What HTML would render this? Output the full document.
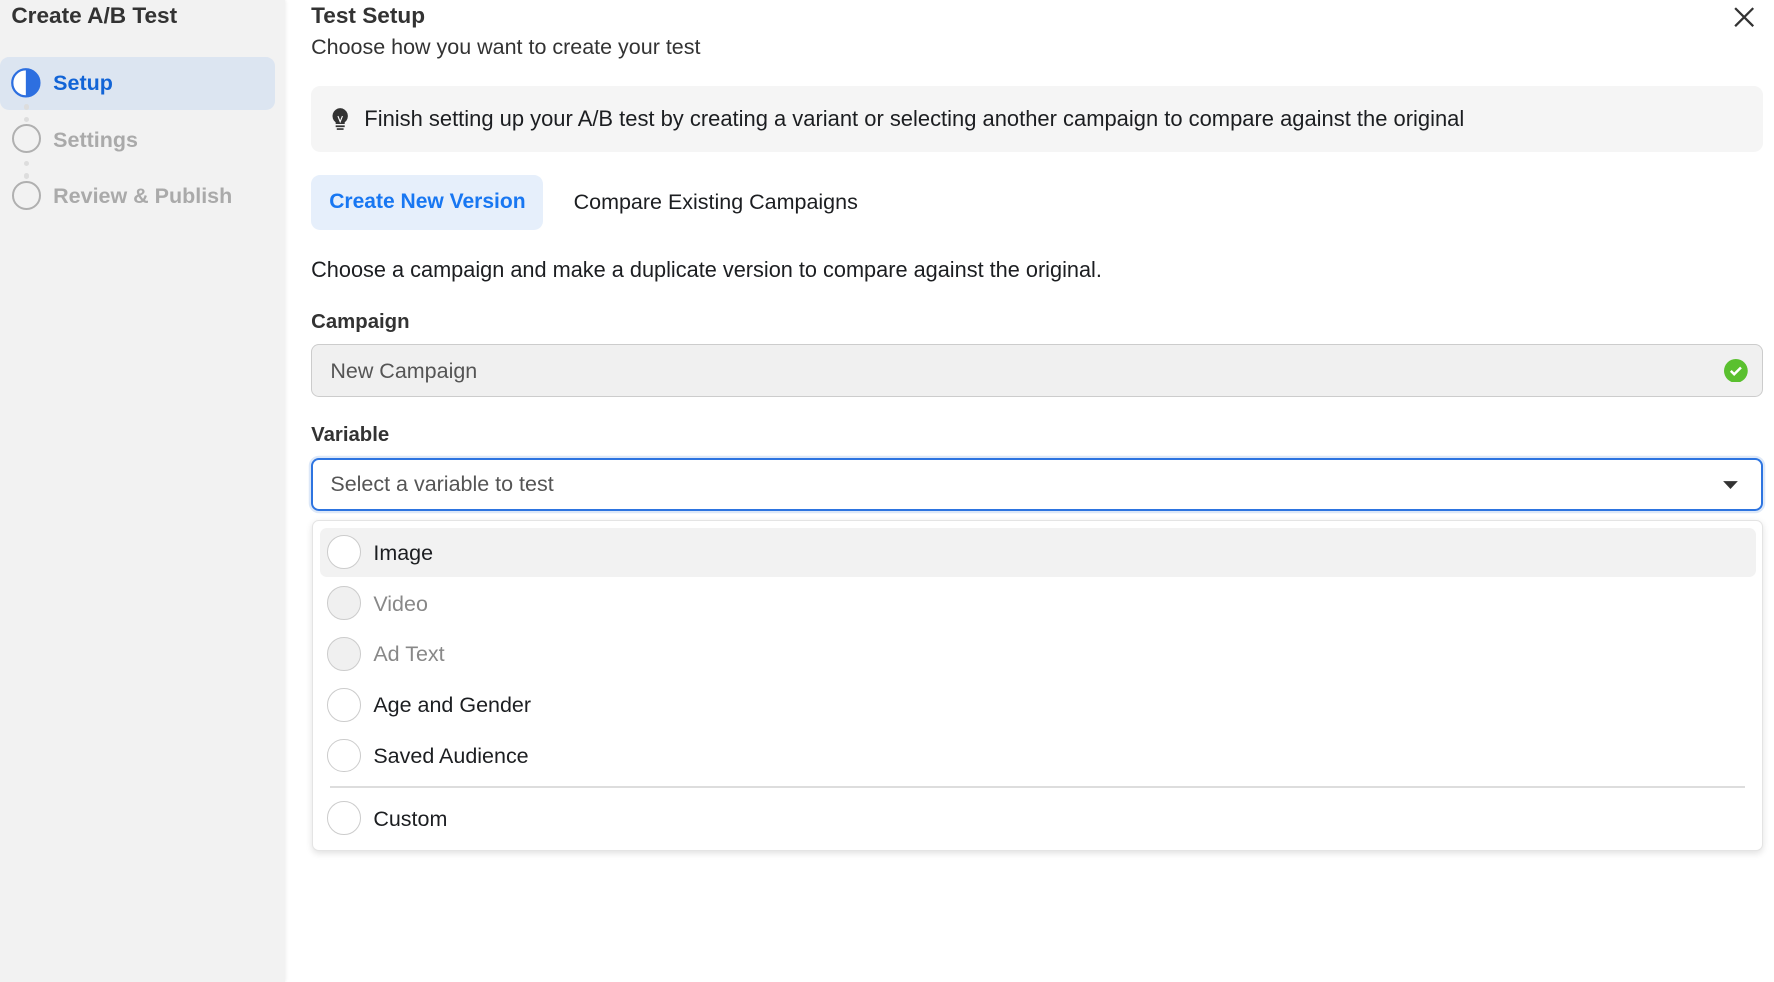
<!DOCTYPE html>
<html><head><meta charset="utf-8"><style>
html,body{margin:0;padding:0;width:1774px;height:982px;overflow:hidden;background:#fff}
#w{zoom:1.13138;width:1568px;height:868px;position:relative;font-family:"Liberation Sans",Arial,sans-serif;color:#1c1e21}
.a{position:absolute;white-space:nowrap}
#sb{position:absolute;left:0;top:0;width:252px;height:868px;background:#f2f2f2;box-shadow:1px 0 3px rgba(0,0,0,.08)}
.st{position:absolute;left:47px;font-size:19px;font-weight:bold;color:#aaa;line-height:24px}
.c{position:absolute;left:11px;width:22px;height:22px;border:2px solid #b0b0b0;border-radius:50%;box-sizing:content-box}
.dot{position:absolute;left:21px;width:5px;height:5px;border-radius:50%;background:#ddd}
.r{position:absolute;left:289px;width:28px;height:28px;border:1.5px solid #ccc;border-radius:50%;background:#fff}
.r.d{background:#f0f0f0}
.it{position:absolute;left:330px;font-size:19px;line-height:24px;color:#1c1e21}
</style></head><body><div id="w">
<div id="sb">
<div class="a" style="left:10px;top:3px;font-size:20px;font-weight:bold;color:#333">Create A/B Test</div>
<div style="position:absolute;left:0;top:50px;width:243px;height:47px;background:#dce5f1;border-radius:8px"></div>
<svg style="position:absolute;left:9px;top:59px" width="28" height="28"><circle cx="14" cy="14" r="12" fill="#fff" stroke="#2d6fe0" stroke-width="2"/><path d="M14 2a12 12 0 0 1 0 24z" fill="#2d6fe0"/></svg>
<div class="st" style="top:62px;color:#1264d6">Setup</div>
<div class="dot" style="top:92px"></div><div class="dot" style="top:103px"></div>
<div class="c" style="top:110px"></div>
<div class="st" style="top:112px">Settings</div>
<div class="dot" style="top:142px"></div><div class="dot" style="top:153px"></div>
<div class="c" style="top:160px"></div>
<div class="st" style="top:162px">Review &amp; Publish</div>
</div>
<div class="a" style="left:275px;top:3px;font-size:20px;font-weight:bold;color:#333">Test Setup</div>
<div class="a" style="left:275px;top:31px;font-size:19px;color:#333">Choose how you want to create your test</div>
<svg style="position:absolute;left:1533px;top:6px" width="18" height="18"><path d="M1 1L17 17M17 1L1 17" stroke="#333" stroke-width="2"/></svg>
<div style="position:absolute;left:275px;top:76px;width:1283px;height:58px;background:#f5f5f5;border-radius:8px"></div>
<svg style="position:absolute;left:292px;top:95px" width="18" height="22"><path d="M9 1a7 7 0 0 0-4 12.6V15h8v-1.4A7 7 0 0 0 9 1z" fill="#333"/><path d="M7 8l2 5 2-5" stroke="#fff" stroke-width="1" fill="none"/><path d="M5 17h8M6 19.5h6" stroke="#333" stroke-width="1.5"/></svg>
<div class="a" style="left:322px;top:94px;font-size:19.4px;color:#1c1e21">Finish setting up your A/B test by creating a variant or selecting another campaign to compare against the original</div>
<div style="position:absolute;left:275px;top:155px;width:205px;height:48px;background:#e6effb;border-radius:8px"></div>
<div class="a" style="left:291px;top:168px;font-size:18.6px;font-weight:bold;color:#1877f2">Create New Version</div>
<div class="a" style="left:507px;top:168px;font-size:19px;color:#1c1e21">Compare Existing Campaigns</div>
<div class="a" style="left:275px;top:227px;font-size:19.2px;color:#1c1e21">Choose a campaign and make a duplicate version to compare against the original.</div>
<div class="a" style="left:275px;top:275px;font-size:18px;font-weight:bold;color:#333">Campaign</div>
<div style="position:absolute;left:275px;top:304px;width:1283px;height:47px;box-sizing:border-box;background:#f0f0f0;border:1.5px solid #ccc;border-radius:7px"></div>
<div class="a" style="left:292px;top:317px;font-size:19px;color:#555">New Campaign</div>
<svg style="position:absolute;left:1524px;top:317px" width="21" height="21"><circle cx="10.5" cy="10.5" r="10.5" fill="#5ac02f"/><path d="M6 10.5l3 3 6-6" stroke="#fff" stroke-width="2.2" fill="none"/></svg>
<div class="a" style="left:275px;top:375px;font-size:18px;font-weight:bold;color:#333">Variable</div>
<div style="position:absolute;left:275px;top:405px;width:1283px;height:47px;box-sizing:border-box;border:2px solid #2d74e0;border-radius:7px;box-shadow:0 0 0 2px #dde8f8"></div>
<div class="a" style="left:292px;top:417px;font-size:19px;color:#555">Select a variable to test</div>
<svg style="position:absolute;left:1522px;top:424px" width="16" height="10"><path d="M1 1h13l-6.5 7z" fill="#333"/></svg>
<div style="position:absolute;left:276px;top:460px;width:1282px;height:292px;box-sizing:border-box;border:1px solid #e4e4e4;border-radius:6px;box-shadow:0 2px 6px rgba(0,0,0,.12);background:#fff"></div>
<div style="position:absolute;left:283px;top:467px;width:1269px;height:43px;background:#f2f2f2;border-radius:6px"></div>
<div class="r" style="top:473px"></div><div class="it" style="top:477px">Image</div>
<div class="r d" style="top:518px"></div><div class="it" style="top:522px;color:#888">Video</div>
<div class="r d" style="top:563px"></div><div class="it" style="top:567px;color:#888">Ad Text</div>
<div class="r" style="top:608px"></div><div class="it" style="top:612px">Age and Gender</div>
<div class="r" style="top:653px"></div><div class="it" style="top:657px">Saved Audience</div>
<div style="position:absolute;left:292px;top:695px;width:1250px;height:1.5px;background:#ddd"></div>
<div class="r" style="top:708px"></div><div class="it" style="top:712px">Custom</div>
</div></body></html>
